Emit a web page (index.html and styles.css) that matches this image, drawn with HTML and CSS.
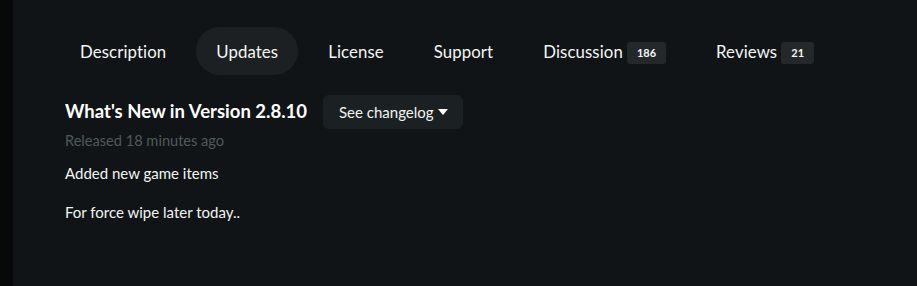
FILE: index.html
```html
<!DOCTYPE html>
<html>
<head>
<meta charset="utf-8">
<link rel="stylesheet" href="styles.css">
</head>
<body>
<div class="page">
  <div class="strip"></div>
  <main class="main">
    <nav class="tabs">
      <a class="tab">Description</a>
      <a class="tab active">Updates</a>
      <a class="tab">License</a>
      <a class="tab">Support</a>
      <a class="tab">Discussion<span class="badge">186</span></a>
      <a class="tab">Reviews<span class="badge">21</span></a>
    </nav>
    <section class="update">
      <div class="head">
        <h2 class="title">What's New in Version 2.8.10</h2>
        <button class="btn">See changelog <svg class="caret" width="10" height="6" viewBox="0 0 10 6"><path d="M0 0h10L5 6z" fill="#fff"/></svg></button>
      </div>
      <div class="released">Released 18 minutes ago</div>
      <p class="line">Added new game items</p>
      <p class="line">For force wipe later today..</p>
    </section>
  </main>
</div>
</body>
</html>
```

FILE: styles.css
```css
* { box-sizing: border-box; }
html, body { margin: 0; height: 100%; }
body {
  background: #111416;
  font-family: "Lato", "Noto Sans", sans-serif;
  color: #f2f4f4;
}
.page { display: flex; height: 286px; }
.strip { width: 13px; background: #070909; flex-shrink: 0; }
.main { flex: 1; padding: 27px 0 0 47px; }
.tabs { display: flex; gap: 10px; height: 48px; align-items: stretch; }
.tab {
  display: flex; align-items: center;
  padding: 0 20px;
  font-size: 16.8px;
  letter-spacing: 0.1px;
  border-radius: 24px;
  color: #f4f6f6;
}
.tab.active { background: #1d2022; }
.badge {
  margin-left: 4px;
  background: #24282a;
  border-radius: 3px;
  font-size: 11px;
  font-weight: 700;
  letter-spacing: 0;
  padding: 0 10px;
  height: 22px;
  line-height: 22px;
  margin-top: 3px;
}
.update { padding: 20px 0 0 5px; }
.head { display: flex; align-items: center; gap: 16px; }
.title { margin: 0 0 2px; font-size: 18.5px; font-weight: 700; color: #fff; }
.btn {
  background: #1b2123; border: 0; border-radius: 6px;
  color: #f2f4f4; font: inherit; font-size: 15px;
  height: 34px; padding: 0 15px 0 16px;
  display: flex; align-items: center; gap: 4px;
}
.released { color: #4f5a5a; font-size: 14.6px; margin-top: 3px; }
.line { margin: 15px 0 0; font-size: 15px; }
.line + .line { margin-top: 21px; }
```
